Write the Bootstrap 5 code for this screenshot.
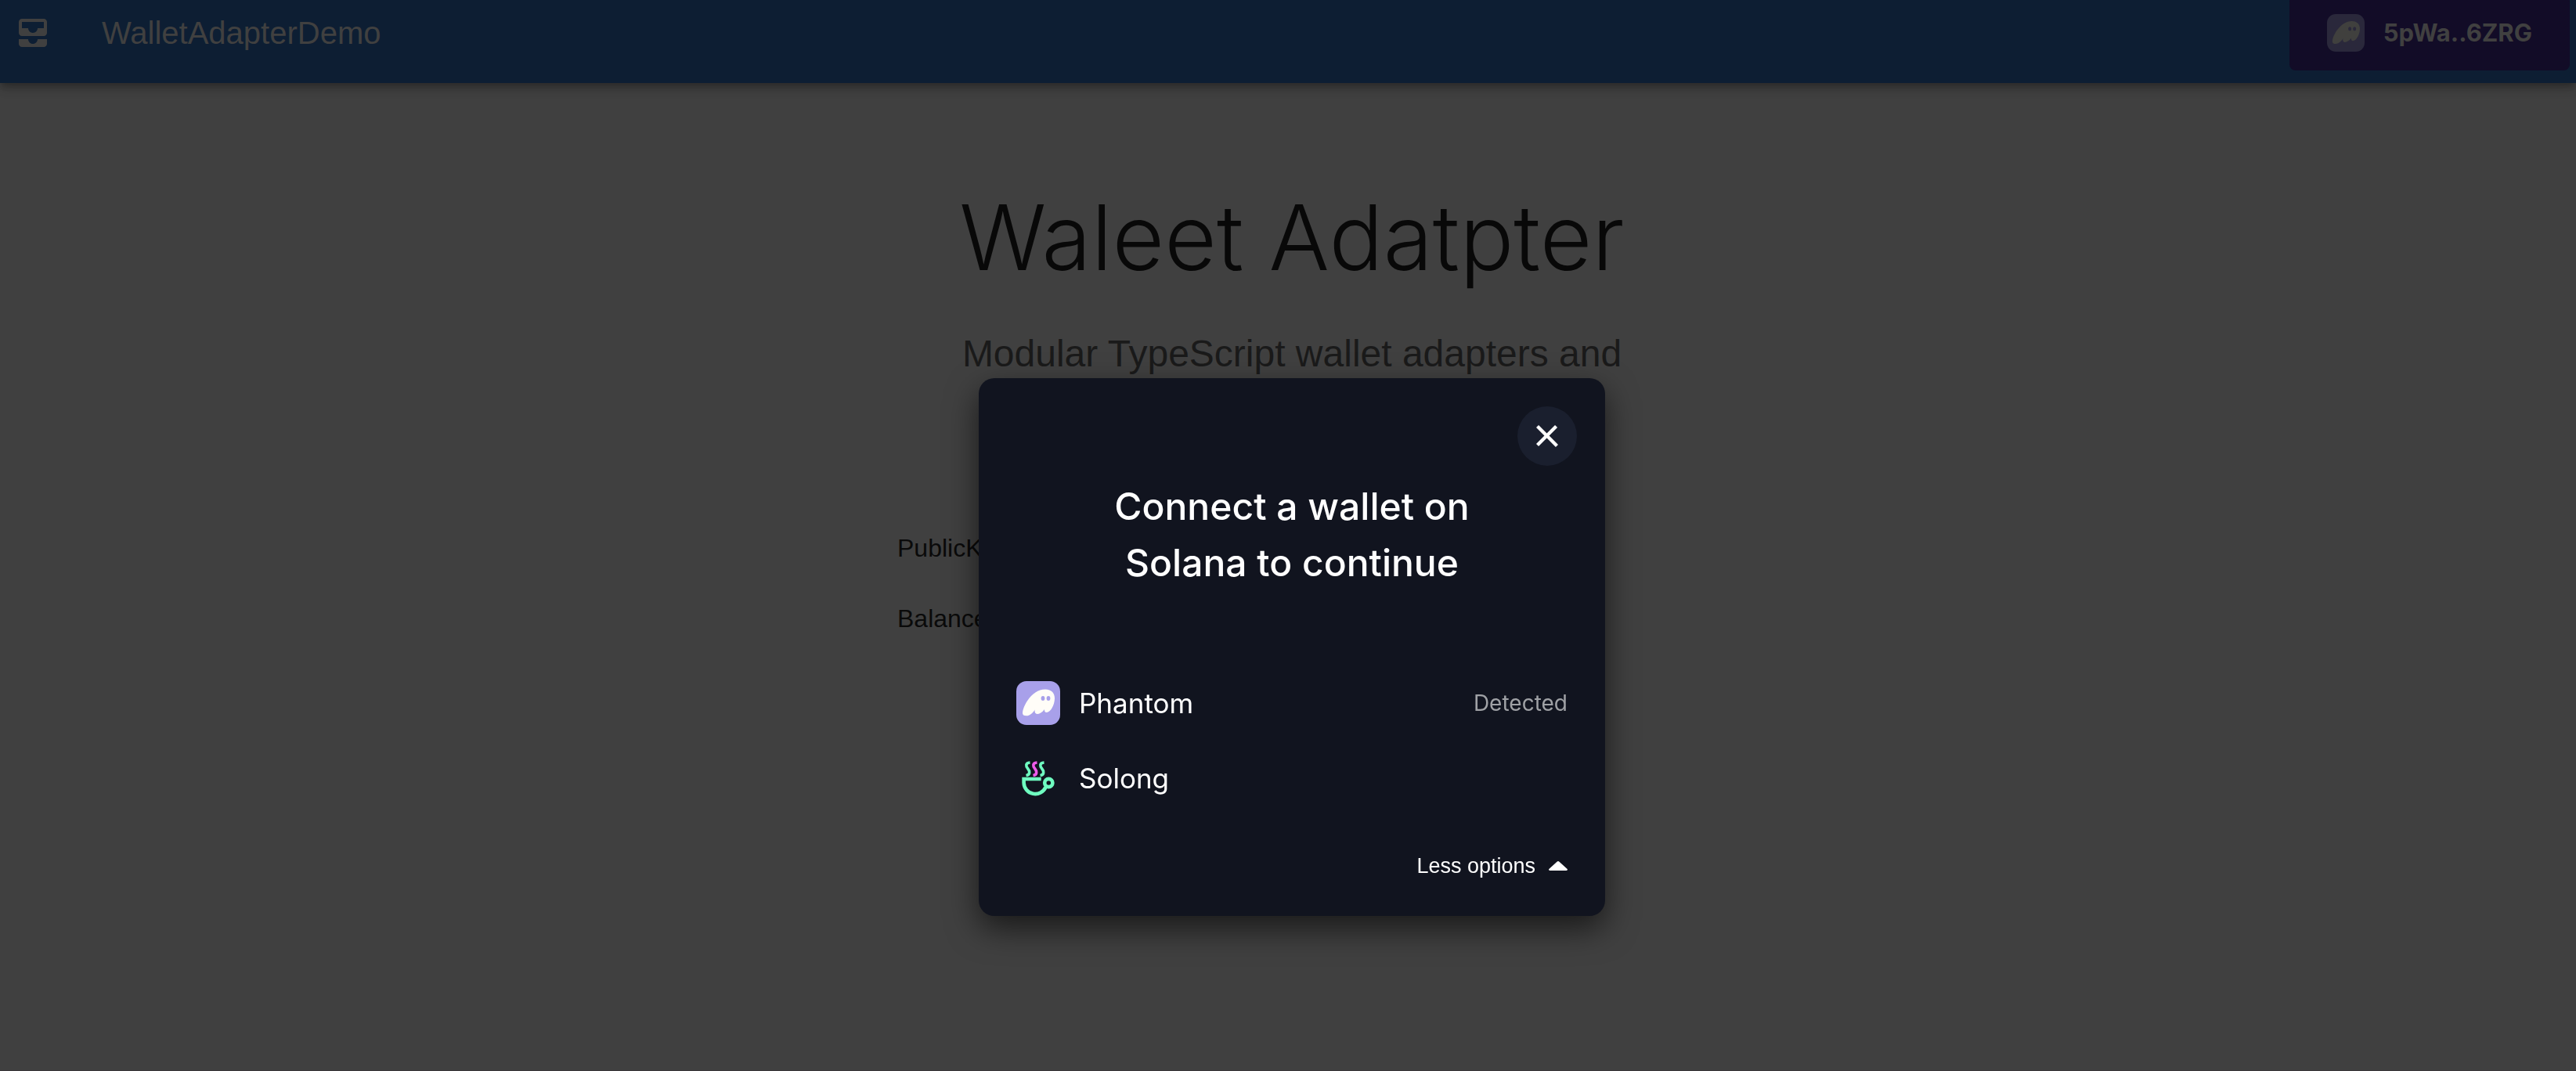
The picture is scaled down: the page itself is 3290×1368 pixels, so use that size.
<!DOCTYPE html>
<html lang="en">
<head>
<meta charset="utf-8">
<meta name="viewport" content="width=device-width, initial-scale=1">
<title>WalletAdapterDemo</title>
<link href="https://cdn.jsdelivr.net/npm/bootstrap@5.3.0/dist/css/bootstrap.min.css" rel="stylesheet">
<style>
  body { background: #404040; color: #0a0a0a; font-family: "Liberation Sans", Arial, sans-serif; font-size: 32px; min-height: 100vh; overflow: hidden; border-bottom: 1px solid #3a373a; }
  .app-bar { background: #0d1e33; color: #404040; height: 106px; padding: 0 8px 22px 18px; box-shadow: 0 4px 8px -2px rgba(0,0,0,.2), 0 8px 10px rgba(0,0,0,.14), 0 2px 20px rgba(0,0,0,.12); }
  .app-bar svg, .wallet-list svg, .less-btn svg, .close-btn svg { display: block; flex: none; }
  .app-title { font-size: 40px; line-height: 48px; margin-left: 64px; color: #404040; }
  .wallet-btn { font-family: Inter, "Open Sans", sans-serif; background: #120c27; color: #404040; font-size: 31px; font-weight: 700; height: 96px; margin-top: -6px; margin-bottom: -6px; padding: 0 48px; gap: 24px; border: 0; border-radius: 8px; }
  .hero { padding: 128px 0 0 10px; }
  .hero-title { font-family: Inter, Roboto, sans-serif; font-weight: 300; font-size: 115px; line-height: 140px; margin: 0 0 46px; color: #080808; }
  .hero-text { font-size: 48px; line-height: 64px; color: #1a1a1a; margin: 0 auto 192px; }
  .facts { max-width: 1008px; line-height: 48px; }
  .facts dt { font-weight: 400; margin-bottom: 42px; }
  .scrim { padding: 285px 0 0 10px; }
  .wallet-modal { width: 800px; background: #11141f; color: #fff; border-radius: 20px; box-shadow: 0 16px 40px rgba(0,0,0,.6); font-family: Inter, "Open Sans", sans-serif; padding: 36px 0 48px; }
  .close-btn { width: 76px; height: 76px; background: #1a1f2e; border: 0; margin-right: 36px; }
  .modal-heading { font-size: 48px; line-height: 72px; font-weight: 500; margin: 16px 0 95px; }
  .wallet-row { height: 96px; padding: 0 48px; border: 0; background: none; color: #fff; font-size: 35px; gap: 24px; }
  .detected { font-size: 28px; color: #9fa1a5; }
  .less-btn { font-family: "Liberation Sans", Arial, sans-serif; font-size: 27px; line-height: 32px; color: #fff; background: none; border: 0; padding: 0 48px; margin-top: 48px; gap: 17px; }
</style>
<script src="https://cdn.jsdelivr.net/npm/bootstrap@5.3.0/dist/js/bootstrap.bundle.min.js"></script>
</head>
<body>
<svg class="d-none" aria-hidden="true">
  <symbol id="ghost" viewBox="0 0 56 56">
    <path fill="currentColor" d="M8 41C8 32 20 10.500 37 10.500C45 10.500 49 15.500 49 22C49 30 44 40 38.500 40C36.500 40 35.800 38 36 36C33 40 29.500 42 26.500 42C24 42 23.200 39.500 23.700 36.500C21 41 17 44.300 13 44.300C9.500 44.300 8 43 8 41Z"/>
  </symbol>
</svg>

<header class="app-bar d-flex align-items-center">
  <svg width="48" height="48" viewBox="0 0 24 24" fill="#404040" aria-hidden="true"><path d="M19 3H5c-1.100 0-2 .9-2 2v7c0 1.100.9 2 2 2h14c1.100 0 2-.9 2-2V5c0-1.100-.9-2-2-2zm0 6h-4c0 1.620-1.380 3-3 3s-3-1.380-3-3H5V5h14v4zm-4 7h6v3c0 1.100-.9 2-2 2H5c-1.100 0-2-.9-2-2v-3h6c0 1.660 1.340 3 3 3s3-1.340 3-3z"/></svg>
  <span class="app-title">WalletAdapterDemo</span>
  <button type="button" class="wallet-btn d-flex align-items-center ms-auto">
    <svg width="48" height="48" viewBox="0 0 56 56" color="#40403e" aria-hidden="true"><rect width="56" height="56" rx="13" fill="#2a283b"/><use href="#ghost"/><g fill="#2a283b"><ellipse cx="34" cy="22" rx="2.400" ry="3"/><ellipse cx="41" cy="22" rx="2.400" ry="3"/></g></svg>
    5pWa..6ZRG
  </button>
</header>

<main class="hero">
  <h1 class="hero-title text-center">Waleet Adatpter</h1>
  <p class="hero-text text-center">Modular TypeScript wallet adapters and</p>
  <dl class="facts mx-auto">
    <dt>PublicKey:</dt>
    <dt>Balance:</dt>
  </dl>
</main>

<div class="scrim position-fixed top-0 start-0 w-100 h-100 d-flex justify-content-center align-items-center">
  <section class="wallet-modal d-flex flex-column" role="dialog" aria-modal="true" aria-labelledby="connect-title">
    <button type="button" class="close-btn rounded-circle d-flex align-items-center justify-content-center align-self-end p-0" aria-label="Close">
      <svg width="28" height="28" viewBox="0 0 14 14" fill="#fff" aria-hidden="true"><path d="M14 12.461 8.300 6.772l5.234-5.233L12.006 0 6.772 5.234 1.540 0 0 1.539l5.234 5.233L0 12.006l1.539 1.528L6.772 8.300l5.690 5.700L14 12.461z"/></svg>
    </button>
    <h2 id="connect-title" class="modal-heading text-center">Connect a wallet on<br>Solana to continue</h2>
    <ul class="wallet-list list-unstyled m-0">
      <li>
        <button type="button" class="wallet-row d-flex align-items-center w-100">
          <svg width="56" height="56" viewBox="0 0 56 56" color="#fffdf8" aria-hidden="true"><rect width="56" height="56" rx="13" fill="#a8a0ea"/><use href="#ghost"/><g fill="#a8a0ea"><ellipse cx="34" cy="22" rx="2.400" ry="3"/><ellipse cx="41" cy="22" rx="2.400" ry="3"/></g></svg>
          Phantom
          <span class="detected ms-auto">Detected</span>
        </button>
      </li>
      <li>
        <button type="button" class="wallet-row d-flex align-items-center w-100">
          <svg width="56" height="56" viewBox="0 0 56 56" fill="none" stroke="#6ffcc0" aria-hidden="true">
            <g stroke-width="3.600"><path d="M17.500 8C11 8.500 12.500 13 14.500 15.500C17.500 19 18 23.500 12.500 24.500"/><path stroke="#ee5bea" d="M26.500 8C20 8.500 21.500 13 23.500 15.500C26.500 19 27 23.500 21.500 24.500"/><path d="M35.500 8C29 8.500 30.500 13 32.500 15.500C35.500 19 36 23.500 30.500 24.500"/></g>
            <g stroke-width="4.600"><path d="M31.700 29H9.600V34A14.600 14.600 0 0 0 37.500 39.500"/><circle cx="41.300" cy="34" r="5.100"/></g>
          </svg>
          Solong
        </button>
      </li>
    </ul>
    <button type="button" class="less-btn d-flex align-items-center align-self-end">
      Less options
      <svg width="24" height="12" viewBox="0 0 24 12" fill="#fff" aria-hidden="true"><path d="M1.500 12C0 12-.4 10.600.6 9.700L10.500.7C11.400-.2 12.600-.2 13.500.7L23.400 9.700C24.400 10.600 24 12 22.500 12Z"/></svg>
    </button>
  </section>
</div>
</body>
</html>
